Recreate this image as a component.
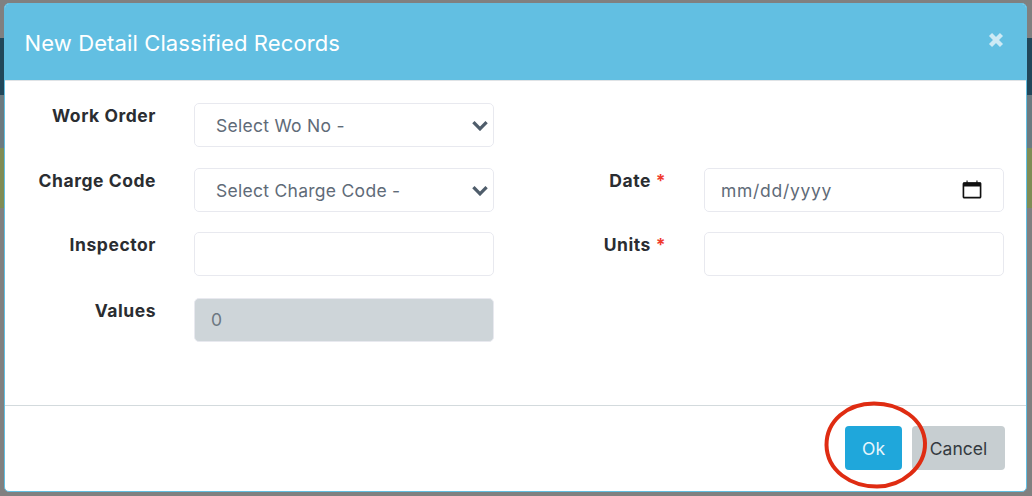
<div class="page">
  <section class="modal" role="dialog" aria-label="New Detail Classified Records">
    <header class="head">
      <h2>New Detail Classified Records</h2>
      <svg class="close" viewBox="0 0 14 14" aria-label="Close"><path d="M2.2 2.2 11.8 11.8M11.8 2.2 2.2 11.8" /></svg>
    </header>
    <div class="body">
      <div class="row first">
        <label class="lab" for="wo">Work Order</label>
        <div class="sel">
          <select id="wo"><option>Select Wo No -</option></select>
          <svg viewBox="0 0 16 10"><path d="M2 2l6 6 6-6" /></svg>
        </div>
      </div>
      <div class="row second">
        <label class="lab" for="cc">Charge Code</label>
        <div class="sel">
          <select id="cc"><option>Select Charge Code -</option></select>
          <svg viewBox="0 0 16 10"><path d="M2 2l6 6 6-6" /></svg>
        </div>
        <label class="lab right" for="dt">Date <span class="req">*</span></label>
        <div class="field datebox" id="dt">
          <span>mm/dd/yyyy</span>
          <svg viewBox="0 0 20 20"><path class="cal" d="M3 4.500h14a.8.8 0 0 1 .8.8V17a.8.8 0 0 1-.8.8H3a.8.8 0 0 1-.8-.8V5.300a.8.8 0 0 1 .8-.8Z" /><path class="calbar" d="M2.500 4.500h15v2.800h-15zM5.500 2.200v2.500M14.500 2.200v2.500" /></svg>
        </div>
      </div>
      <div class="row third">
        <label class="lab" for="ins">Inspector</label>
        <input id="ins" class="field" />
        <label class="lab right" for="un">Units <span class="req">*</span></label>
        <input id="un" class="field" />
      </div>
      <div class="row">
        <label class="lab" for="va">Values</label>
        <input id="va" class="field off" value="0" disabled />
      </div>
    </div>
    <footer class="foot">
      <button class="btn ok">Ok</button>
      <button class="btn cancel">Cancel</button>
    </footer>
  </section>
  <svg class="ring" viewBox="0 0 104 88"><path d="M50 2.500C76 2.500 100 18 101 42 101.500 66 78 85.500 53 85.500 27 85.500 3 70 2.500 44 2.500 20 23 2.500 50 2.500Z" /></svg>
</div>

<style>
  :global(body) { margin: 0; }
  .page {
    position: relative;
    box-sizing: border-box;
    width: 1032px;
    height: 496px;
    padding: 3px 5px 4px 4px;
    font-family: Inter, "Liberation Sans", sans-serif;
    background: linear-gradient(#808080 0 38px, #21475a 38px 95px, #6b7a80 95px 148px, #7f8c55 148px 208px, #808080 208px);
  }
  .modal {
    box-sizing: border-box;
    height: 489px;
    background: #fff;
    border: 1.500px solid #62bfe2;
    border-radius: 5px;
    display: flex;
    flex-direction: column;
    overflow: hidden;
  }
  .head {
    height: 75.500px;
    flex: none;
    background: #62bfe2;
    border-bottom: 1px solid #dfe3e6;
    display: flex;
    justify-content: space-between;
    padding: 0 19.500px;
  }
  h2 { margin: 0; padding-top: 24.500px; font-size: 22px; line-height: 29px; font-weight: 400; color: #fff; letter-spacing: .12px; }
  .close { width: 16px; height: 16px; margin-top: 28px; margin-right: 3px; fill: none; stroke: #cdeaf5; stroke-width: 3.800; }
  .body { flex: 1; padding-top: 22px; }
  .row { display: grid; grid-template-columns: 151px 37.500px 300px 172.500px 37.500px 300px; align-items: start; height: 65px; }
  .row .lab { grid-column: 1; }
  .row > :nth-child(2) { grid-column: 3; }
  .row > .right { grid-column: 4; }
  .row > :nth-child(4) { grid-column: 6; }
  .second { height: 64px; }
  .third { height: 66px; }
  .lab { text-align: right; font-size: 17.500px; line-height: 24px; font-weight: 700; color: #2a2d31; letter-spacing: .55px; white-space: nowrap; padding-top: 1px; }
  .req { color: #f03a2e; }
  .sel { position: relative; height: 44px; }
  select, .field {
    box-sizing: border-box;
    width: 300px;
    height: 44px;
    border: 1.500px solid #e8e9ef;
    border-radius: 5px;
    background: #fff;
    font: 17.500px Inter, "Liberation Sans", sans-serif;
    color: #5f6b78;
    outline: none;
  }
  select { appearance: none; padding: 1px 0 0 21.500px; letter-spacing: .28px; }
  .sel svg { position: absolute; right: 5px; top: 17px; width: 18px; height: 11px; fill: none; stroke: #4f5d6b; stroke-width: 3; pointer-events: none; }
  .field { padding: 0 16.500px; }
  .off { background: #ced5d9; color: #6c7781; opacity: 1; -webkit-text-fill-color: #6c7781; }
  .datebox { display: flex; align-items: center; justify-content: space-between; letter-spacing: .7px; padding-top: 1px; }
  .datebox svg { width: 22px; height: 22px; margin-right: 3px; margin-top: -3px; }
  .cal { fill: none; stroke: #111; stroke-width: 1.500; }
  .calbar { fill: #111; stroke: #111; stroke-width: 1; }
  .foot { height: 86px; flex: none; border-top: 1.500px solid #d3dadd; box-sizing: border-box; display: flex; justify-content: flex-end; align-items: flex-start; gap: 10px; padding: 20px 21px 0 0; }
  .btn { height: 44px; border: 0; border-radius: 4px; font: 17.500px Inter, "Liberation Sans", sans-serif; }
  .ok { width: 57px; background: #1fa7db; color: #e8f6fc; }
  .cancel { width: 93px; background: #c7ced1; color: #343a40; }
  .ring { position: absolute; left: 824px; top: 401px; width: 104px; height: 88px; fill: none; stroke: #df2c12; stroke-width: 4; }
</style>
